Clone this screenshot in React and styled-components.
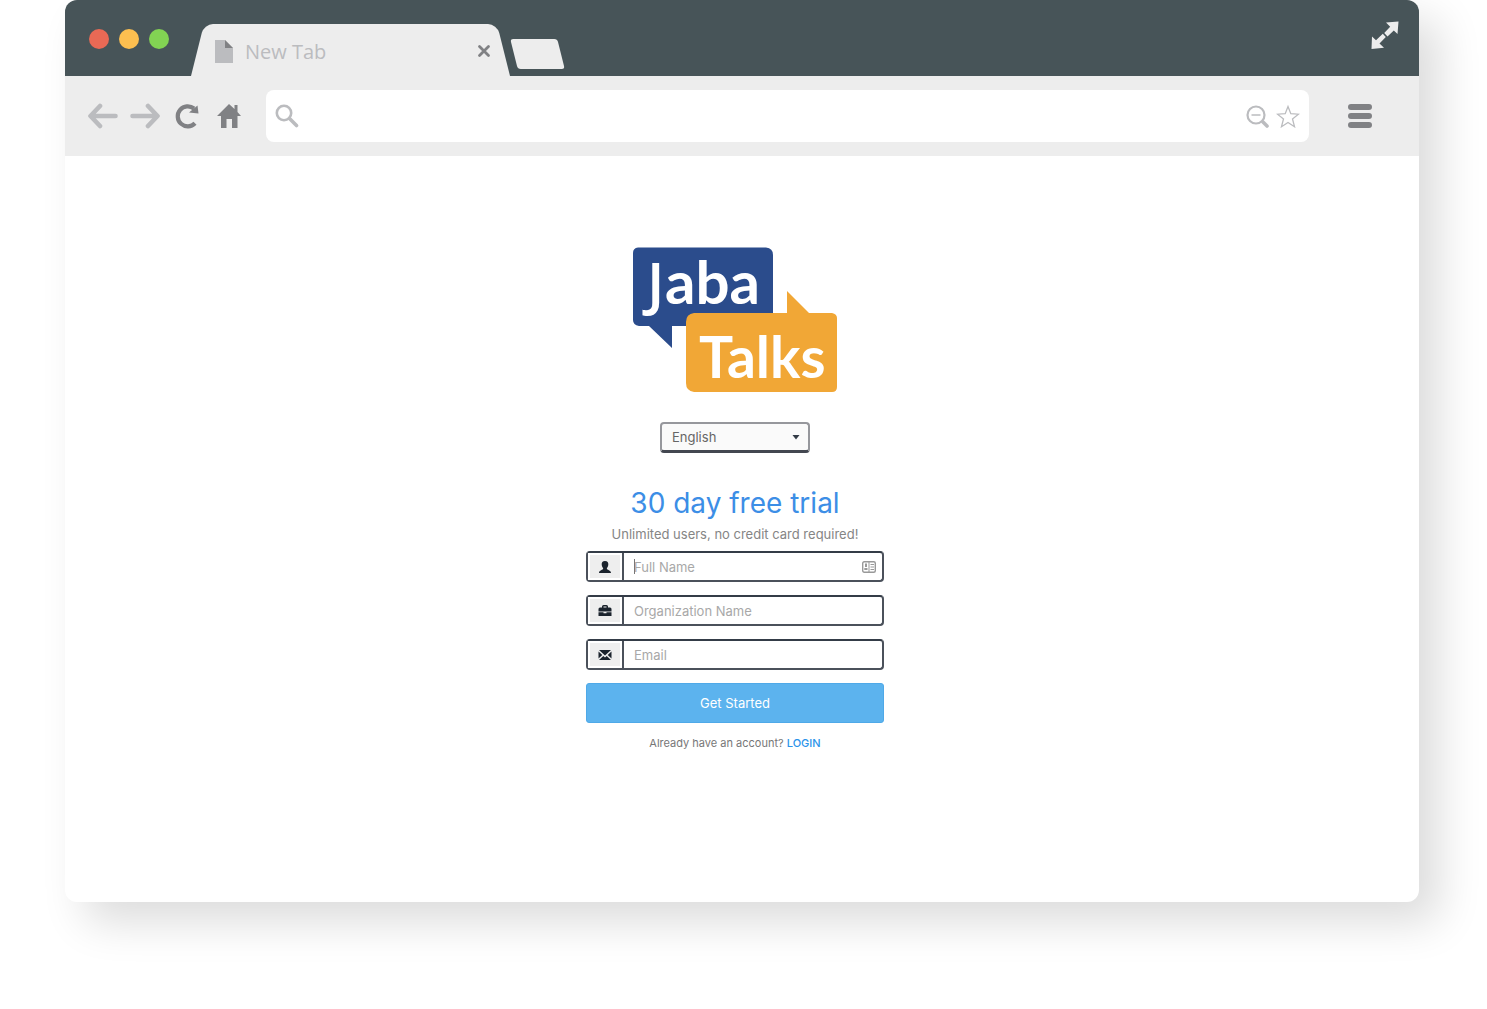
import React from 'react';
import styled, { createGlobalStyle } from 'styled-components';

const GlobalStyle = createGlobalStyle`
  *, *::before, *::after {
    box-sizing: border-box;
  }

  body {
    margin: 0;
    background: #fff;
    font-family: Inter, 'Liberation Sans', sans-serif;
  }

  button, input, select {
    font: inherit;
  }
`;

const PageWrapper = styled.div`
  padding: 0 68px 100px 65px;
`;

const BrowserWindow = styled.div`
  border-radius: 12px;
  background: #fff;
  box-shadow: 20px 20px 44px rgba(0, 0, 0, 0.14);
`;

const TitleBar = styled.header`
  display: flex;
  align-items: flex-end;
  height: 76px;
  padding: 0 19px 0 24px;
  border-radius: 12px 12px 0 0;
  background: #475458;
`;

const Lights = styled.div`
  display: flex;
  gap: 10px;
  margin-right: 22px;
  padding-bottom: 27px;
`;

const Light = styled.span`
  width: 20px;
  height: 20px;
  border-radius: 50%;
  background: ${({ color }) => color};
`;

const IconButton = styled.button`
  display: flex;
  align-items: center;
  justify-content: center;
  flex: none;
  width: ${({ $size }) => $size || 30}px;
  height: ${({ $size }) => $size || 30}px;
  padding: 0;
  border: 0;
  background: none;
  color: ${({ $color }) => $color || '#808184'};
  cursor: pointer;
`;

const Tab = styled.div`
  position: relative;
  z-index: 0;
  display: flex;
  align-items: center;
  gap: 12px;
  width: 319px;
  height: 52px;
  padding: 2px 19px 0 24px;
  font-family: 'Open Sans', 'Noto Sans', sans-serif;
  font-size: 21px;
  color: #bbbcbf;

  &::before,
  &::after {
    content: '';
    position: absolute;
    z-index: -1;
    top: 0;
    bottom: 0;
    width: 60%;
    background: #ededed;
  }

  &::before {
    left: 0;
    border-top-left-radius: 9px;
    transform: skewX(-14deg);
    transform-origin: bottom left;
  }

  &::after {
    right: 0;
    border-top-right-radius: 9px;
    transform: skewX(14deg);
    transform-origin: bottom right;
  }
`;

const TabTitle = styled.span`
  flex: 1;
  font-size: 20px;
`;

const NewTabButton = styled.button`
  width: 47px;
  height: 30px;
  margin: 0 auto 7px 4px;
  padding: 0;
  border: 0;
  border-radius: 3px;
  background: #ededed;
  transform: skewX(14deg);
`;

const ExpandButton = styled(IconButton)`
  margin-bottom: 26px;
`;

const Toolbar = styled.div`
  display: flex;
  align-items: center;
  gap: 12px;
  height: 80px;
  padding: 0 44px 0 23px;
  background: #ededed;
`;

const AddressBar = styled.div`
  display: flex;
  align-items: center;
  flex: 1;
  height: 52px;
  margin: 0 24px 0 10px;
  padding: 0 6px;
  border-radius: 8px;
  background: #fff;
`;

const AddressInput = styled.input`
  flex: 1;
  min-width: 0;
  padding: 0 8px;
  border: 0;
  outline: 0;
  font-size: 18px;
`;

const Content = styled.main`
  display: flex;
  flex-direction: column;
  align-items: center;
  padding: 91px 14px 151px 0;
`;

const LanguageWrapper = styled.div`
  position: relative;
  margin: 29px 0 34px;
`;

const LanguageSelect = styled.select`
  display: block;
  width: 150px;
  height: 31px;
  padding: 0 10px;
  border: 2px solid #96979c;
  border-bottom: 3px solid #434750;
  border-radius: 4px;
  background: #fafafa;
  color: #666;
  font-size: 13px;
  appearance: none;
`;

const SelectArrow = styled.svg`
  position: absolute;
  top: 13px;
  right: 10px;
  pointer-events: none;
`;

const Heading = styled.h1`
  margin: 0 0 6px;
  font-size: 28px;
  font-weight: 400;
  line-height: 32px;
  color: #3c8ee6;
`;

const Subheading = styled.p`
  margin: 0 0 8px;
  font-size: 13px;
  line-height: 18px;
  color: #858585;
`;

const Form = styled.form`
  display: flex;
  flex-direction: column;
  gap: 13px;
  width: 298px;
`;

const FieldWrapper = styled.div`
  position: relative;
  display: flex;
  height: 31px;
  border: 2px solid #4b515b;
  border-top-color: #343c47;
  border-radius: 4px;
  background: #fff;
`;

const FieldIcon = styled.label`
  display: flex;
  align-items: center;
  justify-content: center;
  width: 36px;
  border-right: 2px solid #4b515b;
  background: #eee;
  box-shadow: inset 0 0 0 2px #fff;
  color: #1b232d;
`;

const FieldInput = styled.input`
  flex: 1;
  min-width: 0;
  padding: 0 10px;
  border: 0;
  outline: 0;
  background: none;
  font-size: 13px;
  color: #555;

  &::placeholder {
    color: #a8a8a8;
    opacity: 1;
  }
`;

const TextCursor = styled.span`
  position: absolute;
  top: 6px;
  left: 46px;
  width: 1px;
  height: 15px;
  background: #777;
`;

const ContactIcon = styled.svg`
  align-self: center;
  margin-right: 6px;
`;

const SubmitButton = styled.button`
  height: 40px;
  border: 1px solid #4fa9e8;
  border-radius: 3px;
  background: #5cb3ee;
  color: #fff;
  font-size: 13px;
`;

const LoginText = styled.p`
  margin: 12px 0 0;
  font-size: 11px;
  line-height: 16px;
  color: #777;
`;

const LoginLink = styled.a`
  color: #2b93ea;
  font-weight: 500;
  text-decoration: none;
`;

const LogoText = styled.text`
  fill: #fff;
  font-family: Lato, 'Open Sans', sans-serif;
  font-size: ${({ $size }) => $size}px;
  font-weight: 700;
`;

const LogoInitial = styled.tspan`
  font-family: 'Open Sans', 'Noto Sans', sans-serif;
  font-size: 58px;
  font-weight: 600;
`;

const Logo = () => (
  <svg width="204" height="146" viewBox="0 0 204 146" role="img" aria-label="Jaba Talks">
    <path d="M5 .5H133Q140 1 140 8V79H39V101L16 79H6Q0 78 0 73V6Q0 1 5 .5Z" fill="#2b4c8c" />
    <path d="M154 44L176 66H199Q204 67 204 71V140Q204 145 199 145H61Q53 144 53 136V75Q53 67 61 66H154Z" fill="#f1a736" />
    <LogoText x="14" y="57" $size={60}>
      <LogoInitial>J</LogoInitial>
      <tspan x="32">aba</tspan>
    </LogoText>
    <LogoText x="66" y="131" $size={57}>Talks</LogoText>
  </svg>
);

const ArrowIcon = ({ forward }) => (
  <svg width="30" height="26" viewBox="0 0 30 26" fill="none" stroke="currentColor" strokeWidth="4.600" strokeLinecap="round" strokeLinejoin="round">
    {forward ? <path d="M2.500 13H26M18 3L27.500 13L18 23" /> : <path d="M27.500 13H4M12 3L2.500 13L12 23" />}
  </svg>
);

const ReloadIcon = () => (
  <svg width="24" height="26" viewBox="0 0 24 26">
    <path d="M20 20.200A10 10 0 1 1 19 5.500" fill="none" stroke="currentColor" strokeWidth="4.200" />
    <path d="M22.500 2.500L23.500 10.500L14 9.500Z" fill="currentColor" />
  </svg>
);

const HomeIcon = () => (
  <svg width="24" height="24" viewBox="0 0 24 24" fill="currentColor">
    <path d="M12 0L17.500 5V1H20.500V8L24 12H20.500V24H15V15H9.500V24H4V12H0Z" />
  </svg>
);

const SearchIcon = () => (
  <svg width="24" height="24" viewBox="0 0 24 24" fill="none" stroke="currentColor">
    <circle cx="9" cy="9" r="7.200" strokeWidth="2.600" />
    <path d="M14.500 14.500L21.500 21.500" strokeWidth="3.600" strokeLinecap="round" />
  </svg>
);

const ZoomOutIcon = () => (
  <svg width="24" height="24" viewBox="0 0 24 24" fill="none" stroke="currentColor">
    <circle cx="10" cy="11" r="8.500" strokeWidth="2.200" />
    <path d="M5.500 11H14.500" strokeWidth="1.500" />
    <path d="M17 18L21 22" strokeWidth="3.600" strokeLinecap="round" />
  </svg>
);

const StarIcon = () => (
  <svg width="24" height="24" viewBox="0 0 24 24" fill="none" stroke="currentColor" strokeWidth="1.300">
    <path d="M12 2.500L14.800 9.700L22.500 10.200L16.500 15L18.500 22.700L12 18.500L5.500 22.700L7.500 15L1.500 10.200L9.200 9.700Z" />
  </svg>
);

const MenuIcon = () => (
  <svg width="26" height="26" viewBox="0 0 26 26" stroke="currentColor" strokeWidth="6" strokeLinecap="round">
    <path d="M4 4H22M4 13H22M4 22H22" />
  </svg>
);

const ExpandIcon = () => (
  <svg width="28" height="28" viewBox="0 0 28 28" fill="currentColor">
    <path d="M27.500 .5L26.500 13L22.800 9.500L16.500 15.500L13.200 12L19.200 5.800L15 1.500Z" />
    <path d="M.5 28L1 15.500L5 19.300L11.800 12.800L14.800 16L8.500 22.500L13 26.800Z" />
  </svg>
);

const FileIcon = () => (
  <svg width="18" height="23" viewBox="0 0 18 23">
    <path d="M0 0H10L18 8V23H0Z" fill="#bbbcbf" />
    <path d="M10 0L18 8H10Z" fill="#808184" />
  </svg>
);

const CloseIcon = () => (
  <svg width="14" height="14" viewBox="0 0 14 14" stroke="currentColor" strokeWidth="2.800" strokeLinecap="round">
    <path d="M2.500 2.500L11.500 11.500M11.500 2.500L2.500 11.500" />
  </svg>
);

const UserIcon = () => (
  <svg width="14" height="14" viewBox="0 0 14 14" fill="currentColor">
    <path d="M7 1C9.500 1 10.500 2.700 10.300 4.800C10.100 6.700 9.200 7.500 8.800 8.500C8.800 10 13 10 13 13H1C1 10 5.200 10 5.200 8.500C4.800 7.500 3.900 6.700 3.700 4.800C3.500 2.700 4.500 1 7 1Z" />
  </svg>
);

const BriefcaseIcon = () => (
  <svg width="14" height="14" viewBox="0 0 14 14" fill="currentColor">
    <path d="M4 3.500V2.500Q4 1 5.500 1H8.500Q10 1 10 2.500V3.500H12Q13.500 3.500 13.500 5V7.500H.5V5Q.5 3.500 2 3.500ZM5.500 3.500H8.500V2.500H5.500Z" fillRule="evenodd" />
    <path d="M.5 8.300H5.500V9.300H8.500V8.300H13.500V12H.5Z" />
  </svg>
);

const MailIcon = () => (
  <svg width="14" height="14" viewBox="0 0 14 14" fill="currentColor">
    <path d="M1 2H13L7 7.500ZM.5 3.500L4.300 7L.5 10.500ZM13.500 3.500L9.700 7L13.500 10.500ZM1 12L5.300 8L7 9.500L8.700 8L13 12Z" />
  </svg>
);

const fields = [
  { id: 'fullName', label: 'Full Name', type: 'text', Icon: UserIcon, active: true },
  { id: 'organization', label: 'Organization Name', type: 'text', Icon: BriefcaseIcon },
  { id: 'email', label: 'Email', type: 'email', Icon: MailIcon },
];

const Field = ({ id, label, type, Icon, active }) => (
  <FieldWrapper>
    <FieldIcon htmlFor={id} aria-label={label}>
      <Icon />
    </FieldIcon>
    <FieldInput id={id} type={type} placeholder={label} />
    {active && (
      <>
        <TextCursor />
        <ContactIcon width="14" height="12" viewBox="0 0 14 12" fill="none" stroke="#999" aria-hidden="true">
          <rect x=".7" y=".7" width="12.600" height="10.600" rx="1.500" strokeWidth="1.400" />
          <path d="M7 1V11M8.500 3.500H12M8.500 6H12M8.500 8.500H12" />
          <path d="M4 2.500V6M2.300 8H5.500" strokeWidth="2" />
        </ContactIcon>
      </>
    )}
  </FieldWrapper>
);

const App = () => {
  return (
    <PageWrapper>
      <GlobalStyle />
      <BrowserWindow>
        <TitleBar>
          <Lights>
            <Light color="#e96955" />
            <Light color="#fdbf50" />
            <Light color="#82d353" />
          </Lights>
          <Tab>
            <FileIcon />
            <TabTitle>New Tab</TabTitle>
            <IconButton $size={14} aria-label="Close tab"><CloseIcon /></IconButton>
          </Tab>
          <NewTabButton aria-label="Open new tab" />
          <ExpandButton $color="#ededed" aria-label="Full screen"><ExpandIcon /></ExpandButton>
        </TitleBar>
        <Toolbar>
          <IconButton $color="#bbbcbf" aria-label="Back"><ArrowIcon /></IconButton>
          <IconButton $color="#bbbcbf" aria-label="Forward"><ArrowIcon forward /></IconButton>
          <IconButton aria-label="Reload"><ReloadIcon /></IconButton>
          <IconButton aria-label="Home"><HomeIcon /></IconButton>
          <AddressBar>
            <IconButton $color="#bbbcbf" aria-label="Search"><SearchIcon /></IconButton>
            <AddressInput type="text" aria-label="Address" />
            <IconButton $color="#bbbcbf" aria-label="Zoom out"><ZoomOutIcon /></IconButton>
            <IconButton $color="#bbbcbf" aria-label="Bookmark"><StarIcon /></IconButton>
          </AddressBar>
          <IconButton aria-label="Menu"><MenuIcon /></IconButton>
        </Toolbar>
        <Content>
          <Logo />
          <LanguageWrapper>
            <LanguageSelect aria-label="Language" defaultValue="en">
              <option value="en">English</option>
            </LanguageSelect>
            <SelectArrow width="8" height="5" viewBox="0 0 8 5" aria-hidden="true">
              <path d="M.5 0H7.500L4 4.500Z" fill="#333b46" />
            </SelectArrow>
          </LanguageWrapper>
          <Heading>30 day free trial</Heading>
          <Subheading>Unlimited users, no credit card required!</Subheading>
          <Form onSubmit={(e) => e.preventDefault()}>
            {fields.map((field) => (
              <Field key={field.id} {...field} />
            ))}
            <SubmitButton type="submit">Get Started</SubmitButton>
          </Form>
          <LoginText>
            Already have an account? <LoginLink href="#login">LOGIN</LoginLink>
          </LoginText>
        </Content>
      </BrowserWindow>
    </PageWrapper>
  );
};

export default App;
